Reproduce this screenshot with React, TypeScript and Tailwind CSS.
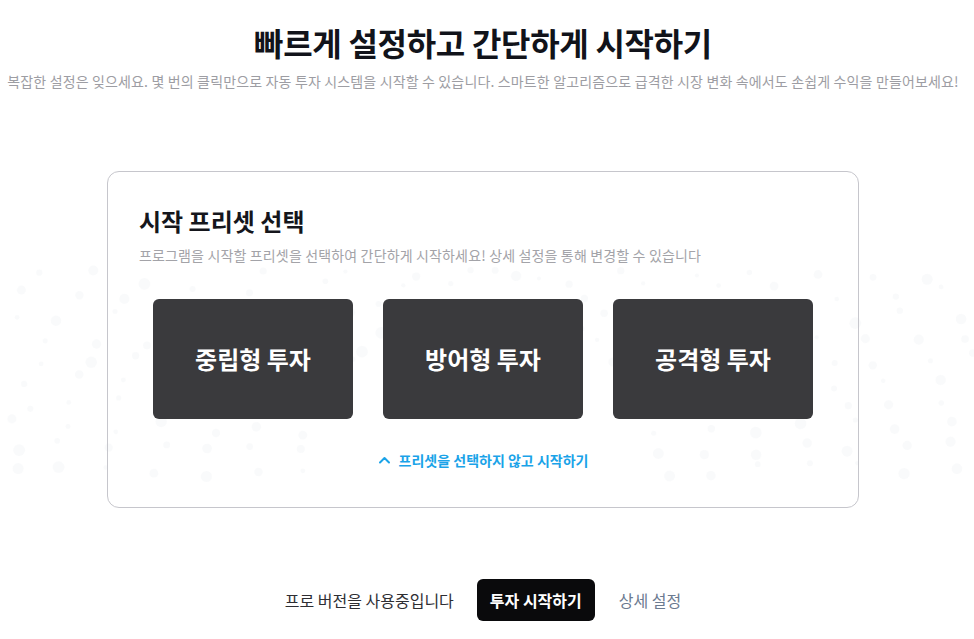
import React from "react";

const font = { fontFamily: '"Noto Sans CJK KR", "Noto Sans", sans-serif' };

// faint dotted globe drawn behind the card
const Dots = () => {
  const dots: { x: number; y: number; r: number }[] = [];
  let seed = 7;
  const rand = () => {
    seed = (seed * 9301 + 49297) % 233280;
    return seed / 233280;
  };
  for (let ring = 0; ring < 9; ring++) {
    const rx = 180 + ring * 48;
    const ry = 170 + ring * 34;
    const count = 26 + ring * 4;
    for (let i = 0; i < count; i++) {
      const a = Math.PI + (Math.PI * i) / (count - 1);
      const x = 483 + rx * Math.cos(a) + (rand() - 0.5) * 14;
      const y = 470 + ry * Math.sin(a) * 0.95 + (rand() - 0.5) * 14;
      if (y < 270 || y > 639) continue;
      dots.push({ x, y, r: 2 + rand() * 4 });
    }
  }
  return (
    <svg className="absolute inset-0 pointer-events-none" width="974" height="639">
      {dots.map((d, i) => (
        <circle key={i} cx={d.x} cy={d.y} r={d.r} fill="#eef0f3" opacity={0.35} />
      ))}
    </svg>
  );
};

const presets = ["중립형 투자", "방어형 투자", "공격형 투자"];

const App = () => (
  <div className="relative w-full h-[639px] bg-white overflow-hidden" style={font}>
    <Dots />
    <div className="relative flex flex-col items-center pt-[22px] pr-[8px]">
      <h1 className="text-[32px] leading-[40px] font-bold text-[#11131a] tracking-[-0.3px]">
        빠르게 설정하고 간단하게 시작하기
      </h1>
      <p className="mt-[9px] text-[14px] leading-[20px] text-[#9d9da3] whitespace-nowrap tracking-[0.15px]">
        복잡한 설정은 잊으세요. 몇 번의 클릭만으로 자동 투자 시스템을 시작할 수 있습니다. 스마트한 알고리즘으로 급격한 시장 변화 속에서도 손쉽게 수익을 만들어보세요!
      </p>

      <div className="mt-[80px] w-[752px] h-[337px] rounded-xl border border-[#c6c6cc] px-[31px] pt-[34px]">
        <h2 className="text-[24px] leading-[30px] font-bold text-[#15161c]">시작 프리셋 선택</h2>
        <p className="mt-[10px] text-[14px] leading-[18px] text-[#a3a3a8] tracking-[0.15px]">
          프로그램을 시작할 프리셋을 선택하여 간단하게 시작하세요! 상세 설정을 통해 변경할 수 있습니다
        </p>
        <div className="mt-[35px] flex justify-center gap-[30px]">
          {presets.map((p) => (
            <button
              key={p}
              className="w-[200px] h-[120px] rounded-md bg-[#3a3a3d] text-white text-[24px] font-bold flex items-center justify-center"
            >
              {p}
            </button>
          ))}
        </div>
        <div className="mt-[31px] flex items-center justify-center gap-[8px] text-[#1aa3e8] text-[14px] leading-[20px] font-bold">
          <svg width="13" height="13" viewBox="0 0 13 13" fill="none">
            <path d="M2 8.5 L6.5 4 L11 8.5" stroke="currentColor" strokeWidth="2" strokeLinecap="round" strokeLinejoin="round" />
          </svg>
          <span>프리셋을 선택하지 않고 시작하기</span>
        </div>
      </div>

      <div className="mt-[71px] flex items-center">
        <span className="text-[16px] text-[#2e2e33]">프로 버전을 사용중입니다</span>
        <button className="ml-[23px] h-[42px] px-[13px] rounded-md bg-[#0a0a0c] text-white text-[16px] font-bold">
          투자 시작하기
        </button>
        <span className="ml-[24px] text-[16px] text-[#6b7a90]">상세 설정</span>
      </div>
    </div>
  </div>
);

export default App;
